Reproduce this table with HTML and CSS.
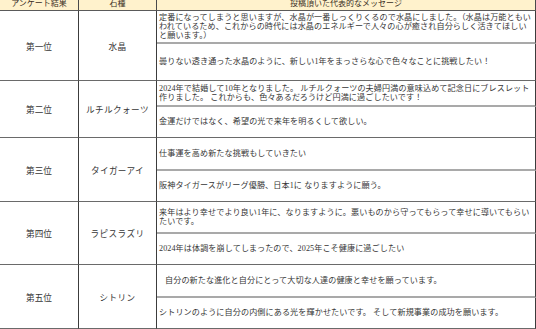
FILE: index.html
```html
<!DOCTYPE html>
<html lang="ja">
<head>
<meta charset="utf-8">
<title>アンケート結果</title>
<link rel="stylesheet" href="styles.css">
</head>
<body>
<div class="sheet">
  <div class="hd c1">アンケート結果</div>
  <div class="hd c2">石種</div>
  <div class="hd c3">投稿頂いた代表的なメッセージ</div>

  <div class="rank">第一位</div>
  <div class="stone">水晶</div>
  <div class="msg inner">定番になってしまうと思いますが、水晶が一番しっくりくるので水晶にしました。（水晶は万能ともい<br>われているため、これからの時代には水晶のエネルギーで人々の心が癒され自分らしく活きてほしい<br>と願います。）</div>
  <div class="msg group">曇りない透き通った水晶のように、新しい1年をまっさらな心で色々なことに挑戦したい！</div>

  <div class="rank">第二位</div>
  <div class="stone">ルチルクォーツ</div>
  <div class="msg inner">2024年で結婚して10年となりました。 ルチルクォーツの夫婦円満の意味込めて記念日にブレスレット<br>作りました。 これからも、色々あるだろうけど円満に過ごしたいです！</div>
  <div class="msg group">金運だけではなく、希望の光で来年を明るくして欲しい。</div>

  <div class="rank">第三位</div>
  <div class="stone">タイガーアイ</div>
  <div class="msg inner">仕事運を高め新たな挑戦もしていきたい</div>
  <div class="msg group">阪神タイガースがリーグ優勝、日本1に なりますように願う。</div>

  <div class="rank">第四位</div>
  <div class="stone">ラピスラズリ</div>
  <div class="msg inner">来年はより幸せでより良い1年に、なりますように。悪いものから守ってもらって幸せに導いてもらい<br>たいです。</div>
  <div class="msg group">2024年は体調を崩してしまったので、2025年こそ健康に過ごしたい</div>

  <div class="rank">第五位</div>
  <div class="stone">シトリン</div>
  <div class="msg inner indent">自分の新たな進化と自分にとって大切な人達の健康と幸せを願っています。</div>
  <div class="msg group">シトリンのように自分の内側にある光を輝かせたいです。 そして新規事業の成功を願います。</div>
</div>
</body>
</html>
```

FILE: styles.css
```css
* { box-sizing: border-box; }
html, body { margin: 0; padding: 0; background: #ffffff; }
body {
  font-family: "Liberation Serif", "Noto Sans CJK JP", serif;
  color: #363636;
  overflow: hidden;
}
.sheet {
  display: grid;
  width: 536px;
  grid-template-columns: 79px 78px 379px;
  grid-template-rows: 11px 33px 37px 26px 31px 33px 31px 32px 31px 33px 31px;
}
.hd {
  background: #fff2cc;
  border-bottom: 1px solid #5a5a5a;
  border-right: 1px solid #4a4a4a;
  font-size: 8px;
  line-height: 8px;
  text-align: center;
  white-space: nowrap;
  overflow: hidden;
  color: #3a2e1e;
}
.rank, .stone {
  grid-row: span 2;
  display: flex;
  align-items: center;
  justify-content: center;
  border-right: 1px solid #3c3c3c;
  border-bottom: 1px solid #6a6a6a;
  font-size: 8.6px;
  white-space: nowrap;
}
.stone { letter-spacing: 0.4px; }
.msg {
  display: flex;
  align-items: center;
  padding-left: 2px;
  border-right: 1px solid #3c3c3c;
  font-size: 8.1px;
  line-height: 9.3px;
  letter-spacing: 0.1px;
  white-space: nowrap;
  overflow: hidden;
}
.msg.inner { border-bottom: 2px solid #a9a9a9; }
.msg.group { border-bottom: 1px solid #6a6a6a; }
.msg.indent { padding-left: 8px; }
```
